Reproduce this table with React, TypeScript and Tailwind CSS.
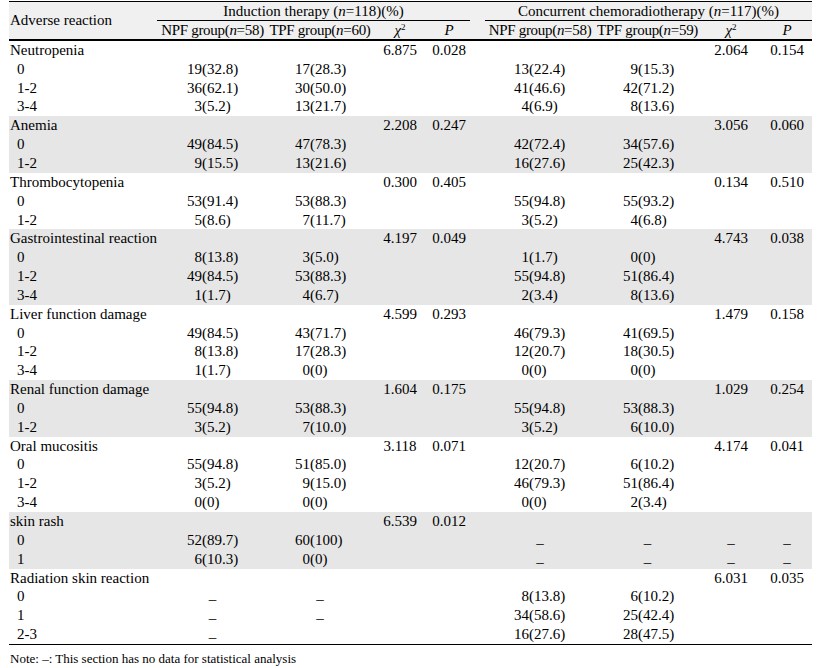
type Group = {
  name: string;
  shade?: boolean;
  ind: [string, string];
  con: [string, string];
  rows: string[][];
};

// rows: [grade, induction NPF, induction TPF, concurrent NPF, concurrent TPF, concurrent χ², concurrent P]
const groups: Group[] = [
  {
    name: 'Neutropenia',
    ind: ['6.875', '0.028'],
    con: ['2.064', '0.154'],
    rows: [
      ['0', '19(32.8)', '17(28.3)', '13(22.4)', '9(15.3)'],
      ['1-2', '36(62.1)', '30(50.0)', '41(46.6)', '42(71.2)'],
      ['3-4', '3(5.2)', '13(21.7)', '4(6.9)', '8(13.6)']
    ]
  },
  {
    name: 'Anemia',
    shade: true,
    ind: ['2.208', '0.247'],
    con: ['3.056', '0.060'],
    rows: [
      ['0', '49(84.5)', '47(78.3)', '42(72.4)', '34(57.6)'],
      ['1-2', '9(15.5)', '13(21.6)', '16(27.6)', '25(42.3)']
    ]
  },
  {
    name: 'Thrombocytopenia',
    ind: ['0.300', '0.405'],
    con: ['0.134', '0.510'],
    rows: [
      ['0', '53(91.4)', '53(88.3)', '55(94.8)', '55(93.2)'],
      ['1-2', '5(8.6)', '7(11.7)', '3(5.2)', '4(6.8)']
    ]
  },
  {
    name: 'Gastrointestinal reaction',
    shade: true,
    ind: ['4.197', '0.049'],
    con: ['4.743', '0.038'],
    rows: [
      ['0', '8(13.8)', '3(5.0)', '1(1.7)', '0(0)'],
      ['1-2', '49(84.5)', '53(88.3)', '55(94.8)', '51(86.4)'],
      ['3-4', '1(1.7)', '4(6.7)', '2(3.4)', '8(13.6)']
    ]
  },
  {
    name: 'Liver function damage',
    ind: ['4.599', '0.293'],
    con: ['1.479', '0.158'],
    rows: [
      ['0', '49(84.5)', '43(71.7)', '46(79.3)', '41(69.5)'],
      ['1-2', '8(13.8)', '17(28.3)', '12(20.7)', '18(30.5)'],
      ['3-4', '1(1.7)', '0(0)', '0(0)', '0(0)']
    ]
  },
  {
    name: 'Renal function damage',
    shade: true,
    ind: ['1.604', '0.175'],
    con: ['1.029', '0.254'],
    rows: [
      ['0', '55(94.8)', '53(88.3)', '55(94.8)', '53(88.3)'],
      ['1-2', '3(5.2)', '7(10.0)', '3(5.2)', '6(10.0)']
    ]
  },
  {
    name: 'Oral mucositis',
    ind: ['3.118', '0.071'],
    con: ['4.174', '0.041'],
    rows: [
      ['0', '55(94.8)', '51(85.0)', '12(20.7)', '6(10.2)'],
      ['1-2', '3(5.2)', '9(15.0)', '46(79.3)', '51(86.4)'],
      ['3-4', '0(0)', '0(0)', '0(0)', '2(3.4)']
    ]
  },
  {
    name: 'skin rash',
    shade: true,
    ind: ['6.539', '0.012'],
    con: ['', ''],
    rows: [
      ['0', '52(89.7)', '60(100)', '–', '–', '–', '–'],
      ['1', '6(10.3)', '0(0)', '–', '–', '–', '–']
    ]
  },
  {
    name: 'Radiation skin reaction',
    ind: ['', ''],
    con: ['6.031', '0.035'],
    rows: [
      ['0', '–', '–', '8(13.8)', '6(10.2)'],
      ['1', '–', '–', '34(58.6)', '25(42.4)'],
      ['2-3', '–', '', '16(27.6)', '28(47.5)']
    ]
  }
];

const cols = 'grid grid-cols-[148px_111px_104px_56px_42px_15px_110px_105px_62px_50px]';

function Dash() {
  return <span className="relative top-[3px]">–</span>;
}

function Count({ value, pad }: { value?: string; pad: string }) {
  if (!value) return <div />;
  if (value === '–')
    return (
      <div className="text-center">
        <Dash />
      </div>
    );
  const single = /^\d\(/.test(value);
  return (
    <div className={`whitespace-nowrap ${pad}`}>
      <span className={single ? 'ml-[7.5px]' : ''}>{value}</span>
    </div>
  );
}

function Stat({ value }: { value?: string }) {
  if (!value) return <div />;
  return <div className="text-center">{value === '–' ? <Dash /> : value}</div>;
}

function Chi() {
  return (
    <span className="italic">
      χ<sup className="text-[9px] not-italic">2</sup>
    </span>
  );
}

export default function App() {
  return (
    <div className="h-[668px] w-[823px] overflow-hidden bg-white font-['Liberation_Serif',serif] text-[15px] leading-none text-black">
      <div className="ml-[9px] w-[803px] pt-[1px]">
        <div className={`${cols} grid-rows-[19px_18px] border-y border-black bg-[#f0f0f0] whitespace-nowrap`}>
          <div className="row-span-2 self-center pl-px">Adverse reaction</div>
          <div className="col-span-4 flex items-center justify-center border-b border-black">
            Induction therapy (<i>n</i>=118)(%)
          </div>
          <div className="row-span-2" />
          <div className="col-span-4 flex items-center justify-center border-b border-black">
            Concurrent chemoradiotherapy (<i>n</i>=117)(%)
          </div>
          <div className="-mx-2 self-center text-center tracking-[-0.3px]">
            NPF group(<i>n</i>=58)
          </div>
          <div className="-mx-2 self-center text-center tracking-[-0.3px]">
            TPF group(<i>n</i>=60)
          </div>
          <div className="self-center text-center">
            <Chi />
          </div>
          <div className="self-center text-center italic">P</div>
          <div className="-mx-2 self-center text-center tracking-[-0.3px]">
            NPF group(<i>n</i>=58)
          </div>
          <div className="-mx-2 self-center text-center tracking-[-0.3px]">
            TPF group(<i>n</i>=59)
          </div>
          <div className="self-center text-center">
            <Chi />
          </div>
          <div className="self-center text-center italic">P</div>
        </div>

        <div className="border-t border-black">
          {groups.map((g) => (
            <div key={g.name} className={g.shade ? 'bg-[#e6e6e6]' : ''}>
              <div className={`${cols} h-[18.85px] items-center`}>
                <div className="whitespace-nowrap pl-px">{g.name}</div>
                <div />
                <div />
                <Stat value={g.ind[0]} />
                <Stat value={g.ind[1]} />
                <div />
                <div />
                <div />
                <Stat value={g.con[0]} />
                <Stat value={g.con[1]} />
              </div>
              {g.rows.map((r) => (
                <div key={r[0]} className={`${cols} h-[18.85px] items-center`}>
                  <div className="pl-[8px]">{r[0]}</div>
                  <Count value={r[1]} pad="pl-[30px]" />
                  <Count value={r[2]} pad="pl-[27px]" />
                  <div />
                  <div />
                  <div />
                  <Count value={r[3]} pad="pl-[29px]" />
                  <Count value={r[4]} pad="pl-[28px]" />
                  <Stat value={r[5]} />
                  <Stat value={r[6]} />
                </div>
              ))}
            </div>
          ))}
        </div>
        <div className="border-t border-black" />
      </div>
      <p className="mt-[7px] pl-[10px] text-[13px]">Note: –: This section has no data for statistical analysis</p>
    </div>
  );
}
